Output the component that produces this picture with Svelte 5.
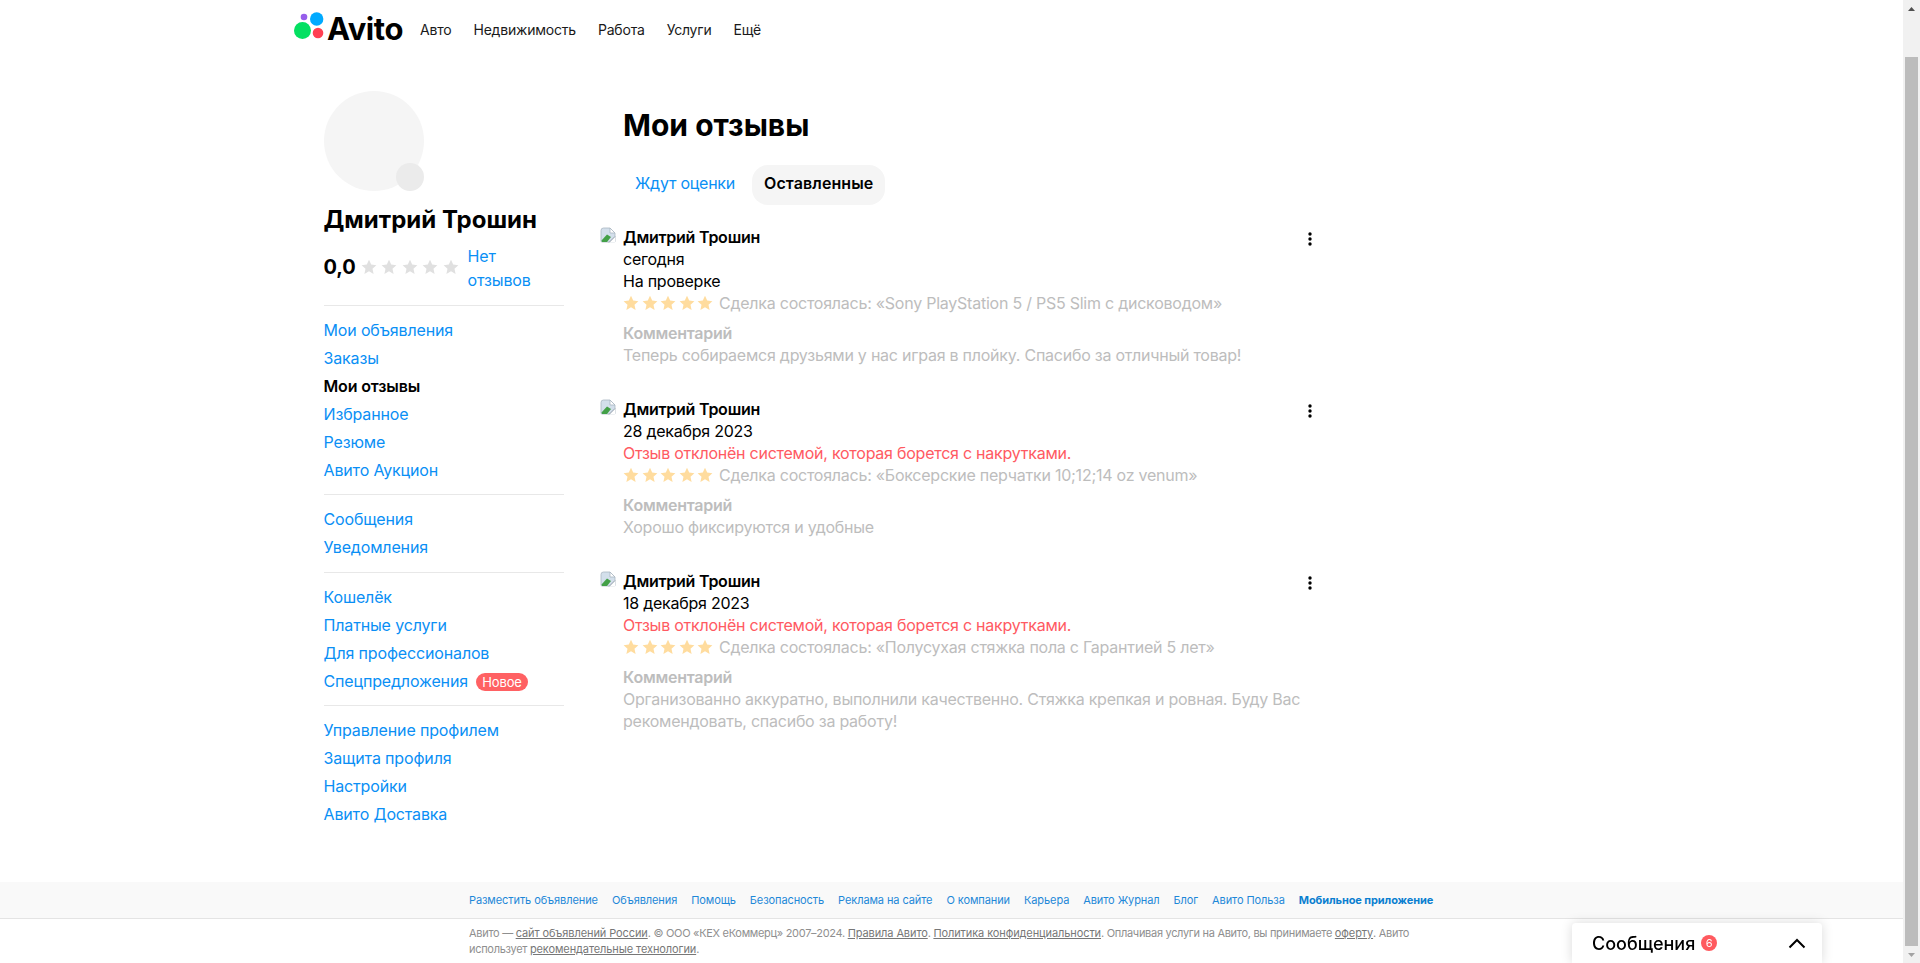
<script>
	const nav = ['Авто', 'Недвижимость', 'Работа', 'Услуги', 'Ещё'];

	const menu = [
		[
			{ label: 'Мои объявления' },
			{ label: 'Заказы' },
			{ label: 'Мои отзывы', active: true },
			{ label: 'Избранное' },
			{ label: 'Резюме' },
			{ label: 'Авито Аукцион' }
		],
		[{ label: 'Сообщения' }, { label: 'Уведомления' }],
		[
			{ label: 'Кошелёк' },
			{ label: 'Платные услуги' },
			{ label: 'Для профессионалов' },
			{ label: 'Спецпредложения', badge: 'Новое' }
		],
		[
			{ label: 'Управление профилем' },
			{ label: 'Защита профиля' },
			{ label: 'Настройки' },
			{ label: 'Авито Доставка' }
		]
	];

	const reviews = [
		{
			date: 'сегодня',
			status: 'На проверке',
			rejected: false,
			deal: 'Сделка состоялась: «Sony PlayStation 5 / PS5 Slim с дисководом»',
			text: 'Теперь собираемся друзьями у нас играя в плойку. Спасибо за отличный товар!'
		},
		{
			date: '28 декабря 2023',
			status: 'Отзыв отклонён системой, которая борется с накрутками.',
			rejected: true,
			deal: 'Сделка состоялась: «Боксерские перчатки 10;12;14 oz venum»',
			text: 'Хорошо фиксируются и удобные'
		},
		{
			date: '18 декабря 2023',
			status: 'Отзыв отклонён системой, которая борется с накрутками.',
			rejected: true,
			deal: 'Сделка состоялась: «Полусухая стяжка пола с Гарантией 5 лет»',
			text: 'Организованно аккуратно, выполнили качественно. Стяжка крепкая и ровная. Буду Вас рекомендовать, спасибо за работу!'
		}
	];

	const footerLinks = [
		'Разместить объявление',
		'Объявления',
		'Помощь',
		'Безопасность',
		'Реклама на сайте',
		'О компании',
		'Карьера',
		'Авито Журнал',
		'Блог',
		'Авито Польза'
	];

	const star = 'M8 .8l2.2 4.8 5.2.6-3.9 3.5 1.1 5.2L8 12.3l-4.6 2.6 1.1-5.2L.6 6.2l5.2-.6z';
</script>

{#snippet stars()}
	{#each [1, 2, 3, 4, 5] as i (i)}
		<svg class="star" width="16" height="16" viewBox="0 0 16 16"><path d={star} fill="currentColor" /></svg>
	{/each}
{/snippet}

<div class="page">
	<header class="header">
		<div class="logo">
			<svg class="logo-mark" width="30" height="28" viewBox="0 0 30 28">
				<circle cx="8.500" cy="18.500" r="8.500" fill="#04e061" />
				<circle cx="22.700" cy="7" r="6.700" fill="#0af" />
				<circle cx="24" cy="21" r="5.300" fill="#ff4053" />
				<circle cx="10" cy="5" r="3.300" fill="#965eeb" />
			</svg>
			<span class="logo-text">Avito</span>
		</div>
		<nav class="nav">
			{#each nav as item (item)}
				<span>{item}</span>
			{/each}
		</nav>
	</header>

	<main class="main">
		<aside class="side">
			<div class="avatar"><span class="avatar-dot"></span></div>
			<div class="profile-name">Дмитрий Трошин</div>
			<div class="rating">
				<b>0,0</b>
				<span class="rating-stars">{@render stars()}</span>
				<span class="rating-link">Нет отзывов</span>
			</div>
			{#each menu as group, g (g)}
				<ul class="menu">
					{#each group as link (link.label)}
						<li class:active={link.active}>
							{link.label}
							{#if link.badge}<span class="badge">{link.badge}</span>{/if}
						</li>
					{/each}
				</ul>
			{/each}
		</aside>

		<section class="content">
			<h1>Мои отзывы</h1>
			<div class="tabs">
				<span class="tab">Ждут оценки</span>
				<span class="tab selected">Оставленные</span>
			</div>
			{#each reviews as review, i (i)}
				<article class="review">
					<svg class="broken" width="16" height="16" viewBox="0 0 16 16">
						<path d="M1 3.500Q1 1 3.500 1H10l5 5v8.500q0 .5-.5.5H2q-1 0-1-1z" fill="#d3dfeb" stroke="#aab6c2" stroke-width=".8" />
						<path d="M10 1v5h5z" fill="#fff" stroke="#aab6c2" stroke-width=".8" />
						<path d="M1.500 13.500L7 7.500l4 2.500L7 15H2z" fill="#43a047" />
						<path d="M9 15.500l6-6v6z" fill="#fff" />
						<path d="M9 15.500l6-6" stroke="#8e9aa6" />
					</svg>
					<div class="review-body">
						<div class="review-name">Дмитрий Трошин</div>
						<div>{review.date}</div>
						<div class:rejected={review.rejected}>{review.status}</div>
						<div class="dim">
							<div class="deal">
								<span class="deal-stars">{@render stars()}</span>
								<span>{review.deal}</span>
							</div>
							<div class="comment-title">Комментарий</div>
							<div>{review.text}</div>
						</div>
					</div>
					<svg class="more" width="4" height="14" viewBox="0 0 4 14">
						<circle cx="2" cy="2" r="1.700" /><circle cx="2" cy="7" r="1.700" /><circle cx="2" cy="12" r="1.700" />
					</svg>
				</article>
			{/each}
		</section>
	</main>

	<footer class="footer">
		<div class="footer-links">
			<div class="footer-inner links">
				{#each footerLinks as link (link)}
					<span>{link}</span>
				{/each}
				<b>Мобильное приложение</b>
			</div>
		</div>
		<div class="footer-inner legal">
			Авито — <u>сайт объявлений России</u>. © ООО «КЕХ еКоммерц» 2007–2024. <u>Правила Авито</u>.
			<u>Политика конфиденциальности</u>. Оплачивая услуги на Авито, вы принимаете <u>оферту</u>. Авито
			использует <u>рекомендательные технологии</u>.
		</div>
	</footer>
</div>

<div class="messenger">
	<span class="messenger-title">Сообщения</span>
	<span class="messenger-count">6</span>
	<svg class="chevron" width="18" height="11" viewBox="0 0 18 11">
		<path d="M1.500 9.500L9 2l7.500 7.500" fill="none" stroke="#000" stroke-width="2" />
	</svg>
</div>

<div class="scrollbar">
	<svg class="arrow" width="7" height="4" viewBox="0 0 7 4"><path d="M3.500 0L7 4H0z" fill="#505050" /></svg>
	<span class="thumb"></span>
	<svg class="arrow" width="7" height="4" viewBox="0 0 7 4"><path d="M3.500 4L7 0H0z" fill="#a3a3a3" /></svg>
</div>

<style>
	:global(body) {
		overflow: hidden;
		background: #fff;
	}

	.page {
		width: 1903px;
		height: 963px;
		overflow: hidden;
		font-family: Inter, 'Noto Sans', sans-serif;
		font-size: 16px;
		line-height: 22px;
		color: #000;
		display: flex;
		flex-direction: column;
	}

	.header {
		height: 58px;
		padding-left: 294px;
		display: flex;
		align-items: center;
		flex-shrink: 0;
	}

	.logo {
		display: flex;
		align-items: center;
		gap: 3px;
		width: 126px;
	}

	.logo-mark {
		margin-bottom: 6px;
	}

	.logo-text {
		font-size: 31px;
		font-weight: 700;
		letter-spacing: -0.4px;
		line-height: 36px;
	}

	.nav {
		display: flex;
		gap: 22px;
		font-size: 14px;
		letter-spacing: -0.2px;
		color: #1a1a1a;
		padding-top: 2px;
	}

	.main {
		height: 824px;
		padding-left: 323.500px;
		display: flex;
		flex-shrink: 0;
	}

	.side {
		width: 240px;
		padding-top: 33px;
		letter-spacing: -0.15px;
	}

	.avatar {
		width: 100px;
		height: 100px;
		border-radius: 50%;
		background: #f5f5f5;
		position: relative;
	}

	.avatar-dot {
		position: absolute;
		right: 0;
		bottom: 0;
		width: 28px;
		height: 28px;
		border-radius: 50%;
		background: #ebebeb;
	}

	.profile-name {
		margin-top: 13px;
		font-size: 24px;
		line-height: 32px;
		font-weight: 700;
		letter-spacing: 0;
	}

	.rating {
		margin: 7px 0 14px;
		height: 48px;
		display: flex;
		align-items: center;
	}

	.rating b {
		font-size: 20px;
		font-weight: 700;
	}

	.rating-stars {
		display: flex;
		margin-left: 5px;
		gap: 4.500px;
		color: #e0e0e0;
	}

	.rating-link {
		margin-left: 9px;
		width: 70px;
		line-height: 24px;
		color: #0a8ff5;
		padding-top: 2px;
	}

	.menu {
		list-style: none;
		margin: 0;
		padding: 10px 0 10.250px;
		border-top: 1px solid #e8e8e8;
		line-height: 28px;
		color: #0a8ff5;
	}

	.menu li.active {
		color: #000;
		font-weight: 600;
	}

	.badge {
		margin-left: 4px;
		padding: 0 6px;
		border-radius: 9px;
		background: #ff6163;
		color: #fff;
		font-size: 13px;
		line-height: 18px;
		display: inline-block;
	}

	.content {
		width: 712px;
		margin-left: 36.500px;
		padding-top: 49px;
		letter-spacing: -0.24px;
	}

	h1 {
		margin: 0 0 0 23px;
		font-size: 30px;
		line-height: 36px;
		font-weight: 700;
		letter-spacing: 0;
	}

	.tabs {
		margin: 22px 0 0 23px;
		display: flex;
		font-size: 16px;
	}

	.tab {
		padding: 0 12px 3px;
		line-height: 37px;
		border-radius: 16px;
		color: #0a8ff5;
	}

	.tab.selected {
		margin-left: 5px;
		background: #f5f5f5;
		color: #000;
		font-weight: 600;
		letter-spacing: 0.1px;
	}

	.review {
		margin-top: 21px;
		margin-bottom: 32px;
		display: flex;
	}

	.review + .review {
		margin-top: 0;
	}

	.broken {
		flex-shrink: 0;
		margin: 1px 7px 0 0;
	}

	.review-body {
		flex: 1;
	}

	.review-name {
		font-weight: 600;
	}

	.rejected {
		color: #ff5a62;
	}

	.dim {
		color: #bdbdbd;
	}

	.deal {
		display: flex;
		align-items: center;
		gap: 6px;
	}

	.deal-stars {
		display: flex;
		gap: 2.500px;
		color: #ffdc9e;
	}

	.comment-title {
		margin-top: 8px;
		font-weight: 600;
	}

	.more {
		flex-shrink: 0;
		margin-top: 6px;
	}

	.footer {
		flex: 1;
		font-size: 11px;
	}

	.footer-links {
		height: 36px;
		background: #f9f9f9;
		border-bottom: 1px solid #e4e4e4;
	}

	.footer-inner {
		padding-left: 469px;
	}

	.links {
		display: flex;
		align-items: center;
		gap: 14px;
		height: 36px;
		letter-spacing: -0.09px;
		color: #1e88d8;
	}

	.links b {
		font-weight: 700;
		color: #0b7fd0;
	}

	.legal {
		width: 980px;
		margin-top: 6px;
		line-height: 16px;
		letter-spacing: -0.3px;
		color: #8f8f8f;
	}

	.legal u {
		color: #777;
		letter-spacing: -0.1px;
	}

	.messenger {
		position: fixed;
		left: 1572px;
		bottom: 0;
		width: 250px;
		height: 40px;
		padding: 0 16px 0 20px;
		box-sizing: border-box;
		background: #fff;
		border-radius: 4px 4px 0 0;
		box-shadow: 0 0 12px rgba(0, 0, 0, 0.15);
		display: flex;
		align-items: center;
		font-family: Inter, 'Noto Sans', sans-serif;
	}

	.messenger-title {
		font-size: 18px;
		font-weight: 500;
	}

	.messenger-count {
		margin-left: 6px;
		width: 16px;
		height: 16px;
		border-radius: 50%;
		background: #ff5a5f;
		color: #fff;
		font-size: 11px;
		line-height: 16px;
		text-align: center;
	}

	.chevron {
		margin-left: auto;
	}

	.scrollbar {
		position: fixed;
		top: 0;
		right: 0;
		bottom: 0;
		width: 17px;
		background: #f1f1f1;
		display: flex;
		flex-direction: column;
		align-items: center;
	}

	.arrow {
		margin: 7px 0 6px;
		flex-shrink: 0;
	}

	.thumb {
		width: 13px;
		margin-top: 40px;
		flex: 1;
		background: #bcbcbc;
	}
</style>
